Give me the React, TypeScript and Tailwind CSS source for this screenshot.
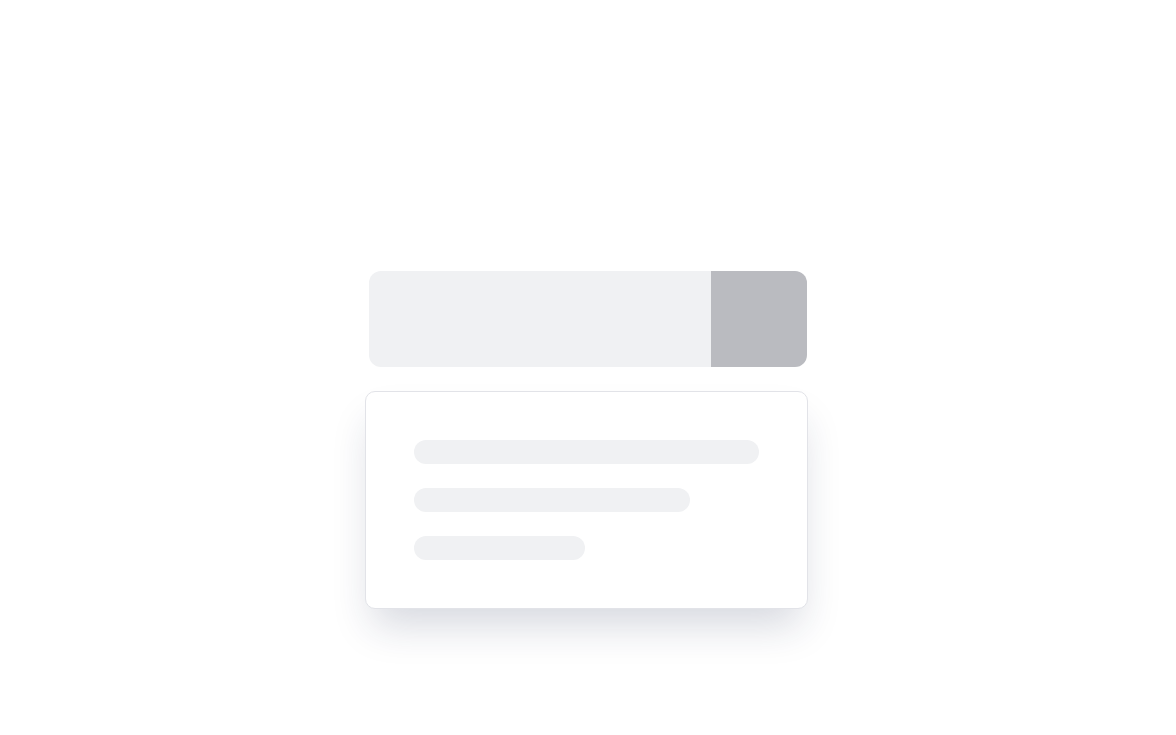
import React from "react";

export default function App() {
  return (
    <div className="min-h-[735px] w-full bg-white flex justify-center" style={{ fontFamily: "Inter, sans-serif" }}>
      <div className="w-[446px] pt-[271px] flex flex-col">
        <div className="ml-[4px] w-[438px] h-[96px] rounded-[12px] overflow-hidden flex">
          <div className="flex-1 bg-[#f0f1f3]" />
          <div className="w-[96px] bg-[#babbc0]" />
        </div>
        <div className="mt-[24px] w-[443px] rounded-[10px] border border-[#e2e3e8] bg-white p-[48px] flex flex-col gap-[24px] shadow-[0_24px_40px_-8px_rgba(30,41,80,0.18)]">
          <div className="h-[24px] w-[345px] rounded-full bg-[#f0f1f3]" />
          <div className="h-[24px] w-[276px] rounded-full bg-[#f0f1f3]" />
          <div className="h-[24px] w-[171px] rounded-full bg-[#f0f1f3]" />
        </div>
      </div>
    </div>
  );
}
